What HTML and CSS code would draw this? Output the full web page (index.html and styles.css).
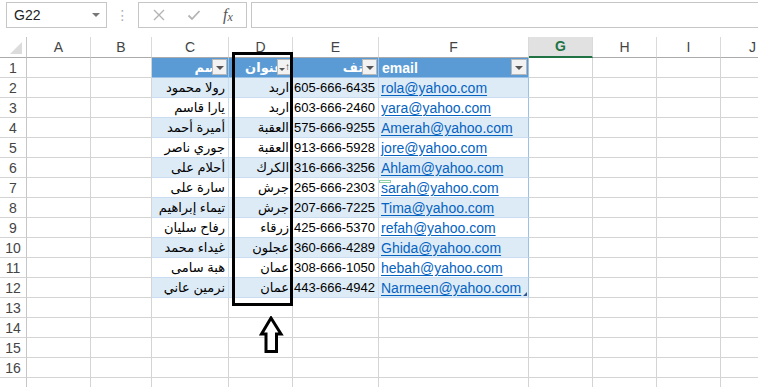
FILE: index.html
```html
<!DOCTYPE html>
<html lang="en">
<head>
<meta charset="utf-8">
<title>Sheet</title>
<link rel="stylesheet" href="styles.css">
</head>
<body>
<div class="app">
  <div class="fbar">
    <div class="namebox"><span class="nb-text">G22</span><span class="nb-arrow"></span></div>
    <div class="grip">⋮</div>
    <div class="fbtns">
      <svg class="ico" width="14" height="14" viewBox="0 0 14 14"><path d="M2 2 L12 12 M12 2 L2 12" stroke="#b4b4b4" stroke-width="1.4" fill="none"/></svg>
      <svg class="ico" width="14" height="14" viewBox="0 0 14 14"><path d="M1.5 7.5 L5 11 L12.5 3" stroke="#b4b4b4" stroke-width="1.8" fill="none"/></svg>
      <span class="fx">f<sub>x</sub></span>
    </div>
    <div class="finput"></div>
  </div>

  <div class="sheet">
    <div class="row colhead">
      <div class="corner"><span class="tri"></span></div>
      <div class="ch">A</div><div class="ch">B</div><div class="ch">C</div><div class="ch">D</div><div class="ch">E</div><div class="ch">F</div><div class="ch sel">G</div><div class="ch">H</div><div class="ch">I</div><div class="ch">J</div>
    </div>

    <div class="row">
      <div class="rh">1</div><div class="c"></div><div class="c"></div>
      <div class="c th ar pc"><span class="htxt">اسم</span><span class="fbtn"><i class="dd"></i></span></div>
      <div class="c th ar pd"><span class="htxt">عنوان</span><span class="fbtn sorted"><i class="dd"></i><b class="up">↑</b></span></div>
      <div class="c th ar pe"><span class="htxt">هاتف</span><span class="fbtn"><i class="dd"></i></span></div>
      <div class="c th en"><span class="htxt">email</span><span class="fbtn big"><i class="dd"></i></span></div>
      <div class="c"></div><div class="c"></div><div class="c"></div><div class="c"></div>
    </div>

    <div class="row band">
      <div class="rh">2</div><div class="c"></div><div class="c"></div>
      <div class="c t name">رولا محمود</div><div class="c t city">اربد</div><div class="c t ph">605-666-6435</div><div class="c t em"><a>rola@yahoo.com</a></div>
      <div class="c"></div><div class="c"></div><div class="c"></div><div class="c"></div>
    </div>
    <div class="row">
      <div class="rh">3</div><div class="c"></div><div class="c"></div>
      <div class="c t name">يارا قاسم</div><div class="c t city">اربد</div><div class="c t ph">603-666-2460</div><div class="c t em"><a>yara@yahoo.com</a></div>
      <div class="c"></div><div class="c"></div><div class="c"></div><div class="c"></div>
    </div>
    <div class="row band">
      <div class="rh">4</div><div class="c"></div><div class="c"></div>
      <div class="c t name">أميرة أحمد</div><div class="c t city">العقبة</div><div class="c t ph">575-666-9255</div><div class="c t em"><a>Amerah@yahoo.com</a></div>
      <div class="c"></div><div class="c"></div><div class="c"></div><div class="c"></div>
    </div>
    <div class="row">
      <div class="rh">5</div><div class="c"></div><div class="c"></div>
      <div class="c t name">جوري ناصر</div><div class="c t city">العقبة</div><div class="c t ph">913-666-5928</div><div class="c t em"><a>jore@yahoo.com</a></div>
      <div class="c"></div><div class="c"></div><div class="c"></div><div class="c"></div>
    </div>
    <div class="row band">
      <div class="rh">6</div><div class="c"></div><div class="c"></div>
      <div class="c t name">أحلام على</div><div class="c t city">الكرك</div><div class="c t ph">316-666-3256</div><div class="c t em"><a>Ahlam@yahoo.com</a></div>
      <div class="c"></div><div class="c"></div><div class="c"></div><div class="c"></div>
    </div>
    <div class="row">
      <div class="rh">7</div><div class="c"></div><div class="c"></div>
      <div class="c t name">سارة على</div><div class="c t city">جرش</div><div class="c t ph">265-666-2303</div><div class="c t em"><span class="tag"></span><a>sarah@yahoo.com</a></div>
      <div class="c"></div><div class="c"></div><div class="c"></div><div class="c"></div>
    </div>
    <div class="row band">
      <div class="rh">8</div><div class="c"></div><div class="c"></div>
      <div class="c t name">تيماء إبراهيم</div><div class="c t city">جرش</div><div class="c t ph">207-666-7225</div><div class="c t em"><a>Tima@yahoo.com</a></div>
      <div class="c"></div><div class="c"></div><div class="c"></div><div class="c"></div>
    </div>
    <div class="row">
      <div class="rh">9</div><div class="c"></div><div class="c"></div>
      <div class="c t name">رفاح سليان</div><div class="c t city">زرقاء</div><div class="c t ph">425-666-5370</div><div class="c t em"><a>refah@yahoo.com</a></div>
      <div class="c"></div><div class="c"></div><div class="c"></div><div class="c"></div>
    </div>
    <div class="row band">
      <div class="rh">10</div><div class="c"></div><div class="c"></div>
      <div class="c t name">غيداء محمد</div><div class="c t city">عجلون</div><div class="c t ph">360-666-4289</div><div class="c t em"><a>Ghida@yahoo.com</a></div>
      <div class="c"></div><div class="c"></div><div class="c"></div><div class="c"></div>
    </div>
    <div class="row">
      <div class="rh">11</div><div class="c"></div><div class="c"></div>
      <div class="c t name">هبة سامى</div><div class="c t city">عمان</div><div class="c t ph">308-666-1050</div><div class="c t em"><a>hebah@yahoo.com</a></div>
      <div class="c"></div><div class="c"></div><div class="c"></div><div class="c"></div>
    </div>
    <div class="row band">
      <div class="rh">12</div><div class="c"></div><div class="c"></div>
      <div class="c t name">نرمين عاني</div><div class="c t city">عمان</div><div class="c t ph">443-666-4942</div><div class="c t em last"><a>Narmeen@yahoo.com</a><span class="handle"></span></div>
      <div class="c"></div><div class="c"></div><div class="c"></div><div class="c"></div>
    </div>
    <div class="row"><div class="rh">13</div><div class="c"></div><div class="c"></div><div class="c"></div><div class="c"></div><div class="c"></div><div class="c"></div><div class="c"></div><div class="c"></div><div class="c"></div><div class="c"></div></div>
    <div class="row"><div class="rh">14</div><div class="c"></div><div class="c"></div><div class="c"></div><div class="c"></div><div class="c"></div><div class="c"></div><div class="c"></div><div class="c"></div><div class="c"></div><div class="c"></div></div>
    <div class="row"><div class="rh">15</div><div class="c"></div><div class="c"></div><div class="c"></div><div class="c"></div><div class="c"></div><div class="c"></div><div class="c"></div><div class="c"></div><div class="c"></div><div class="c"></div></div>
    <div class="row"><div class="rh">16</div><div class="c"></div><div class="c"></div><div class="c"></div><div class="c"></div><div class="c"></div><div class="c"></div><div class="c"></div><div class="c"></div><div class="c"></div><div class="c"></div></div>
    <div class="row"><div class="rh"></div><div class="c"></div><div class="c"></div><div class="c"></div><div class="c"></div><div class="c"></div><div class="c"></div><div class="c"></div><div class="c"></div><div class="c"></div><div class="c"></div></div>
  </div>

  <div class="highlight"></div>
  <svg class="arrow" width="30" height="42" viewBox="0 0 30 42">
    <polygon points="15,2 25,18 20.5,18 20.5,35.5 10,35.5 10,18 5.5,18" fill="#fff" stroke="#000" stroke-width="3" stroke-linejoin="miter"/>
  </svg>
</div>
</body>
</html>
```

FILE: styles.css
```css
* { box-sizing: border-box; }
html, body { margin: 0; padding: 0; background: #fff; }
body { width: 758px; height: 387px; overflow: hidden; font-family: "Liberation Sans", "DejaVu Sans", sans-serif; color: #000; }
.app { position: relative; width: 758px; height: 387px; overflow: hidden; }

/* formula bar */
.fbar { height: 37px; display: flex; align-items: flex-start; padding-top: 2px; }
.namebox { margin-left: 6px; width: 101px; height: 26px; border: 1px solid #c6c6c6; display: flex; align-items: center; justify-content: space-between; padding: 0 6px 0 7px; }
.nb-text { font-size: 14px; color: #222; }
.nb-arrow { width: 0; height: 0; border-left: 4px solid transparent; border-right: 4px solid transparent; border-top: 4px solid #777; }
.grip { width: 31px; text-align: center; color: #b0b0b0; font-size: 14px; line-height: 26px; }
.fbtns { width: 109px; height: 26px; border: 1px solid #c6c6c6; display: flex; align-items: center; padding-left: 13px; gap: 21px; }
.fx { font-family: "Liberation Serif", serif; font-style: italic; font-size: 16px; color: #555; margin-left: 1px; }
.fx sub { font-size: 12px; vertical-align: -1px; }
.finput { margin-left: 4px; flex: 1; height: 26px; border: 1px solid #c6c6c6; border-right: none; }

/* grid */
.sheet { display: flex; flex-direction: column; }
.row { display: grid; grid-template-columns: 27px 64px 61px 77px 64px 86px 150px 64px 64px 64px 64px; height: 20px; }
.c, .rh { border-right: 1px solid #d4d4d4; border-bottom: 1px solid #d4d4d4; height: 20px; position: relative; white-space: nowrap; }
.rh { font-size: 14px; color: #444; text-align: center; line-height: 20px; border-right-color: #c6c6c6; border-bottom-color: #d4d4d4; }

.colhead { height: 21px; }
.corner { border-right: 1px solid #c6c6c6; border-bottom: 1px solid #ababab; position: relative; }
.tri { position: absolute; right: 4px; bottom: 3px; width: 0; height: 0; border-left: 12px solid transparent; border-bottom: 12px solid #dcdcdc; }
.ch { font-size: 14px; color: #444; text-align: center; line-height: 20px; border-right: 1px solid #dadada; border-bottom: 1px solid #ababab; }
.ch.sel { background: #e1e1e1; color: #217346; font-weight: bold; border-bottom: 2px solid #217346; line-height: 19px; }

/* table */
.th { background: #5b9bd5; color: #fff; font-weight: bold; font-size: 14px; line-height: 20px; border-right-color: #9bc2e6; border-bottom-color: #9bc2e6; overflow: hidden; }
.th.ar { text-align: right; font-size: 13px; }
.th.pc { padding-right: 6px; }
.th.pd { padding-right: 9px; }
.th.pe { padding-right: 1px; }
.th.en { padding-left: 3px; }
.fbtn { position: absolute; right: 1px; top: 1px; width: 15px; height: 16px; background: #f2f2f2; border: 1px solid #b8b8b8; display: flex; align-items: center; justify-content: center; }
.fbtn.big { width: 16px; }
.dd { display: block; width: 0; height: 0; border-left: 4px solid transparent; border-right: 4px solid transparent; border-top: 4px solid #555; margin-top: 1px; }
.fbtn.sorted { width: 14px; justify-content: flex-start; padding-left: 1px; gap: 0; }
.fbtn.sorted .dd { border-left-width: 3px; border-right-width: 3px; border-top-width: 3px; margin-top: 4px; }
.up { font-size: 10px; font-weight: normal; color: #333; line-height: 10px; margin-left: 0; }

.row .t { line-height: 20px; border-right-color: #c9dcf0; border-bottom-color: #c9dcf0; }
.band .t { background: #ddebf7; }
.name { text-align: right; padding-right: 3px; font-size: 13px; }
.city { text-align: right; padding-right: 3px; font-size: 13px; }
.ph { font-size: 13px; padding-left: 1px; }
.em { font-size: 14px; padding-left: 2px; border-right-color: #9bc2e6 !important; }
.em a { color: #0563c1; text-decoration: underline; text-underline-offset: 2px; }
.tag { position: absolute; left: 0; top: 2px; width: 12px; height: 3px; border: 1px solid #8fd0a8; }
.handle { position: absolute; right: 1px; bottom: 1px; width: 0; height: 0; border-left: 4px solid transparent; border-bottom: 4px solid #2f5597; }

/* overlays */
.highlight { position: absolute; left: 232px; top: 52px; width: 61px; height: 254px; border: 3px solid #000; }
.arrow { position: absolute; left: 256px; top: 316px; }
```
